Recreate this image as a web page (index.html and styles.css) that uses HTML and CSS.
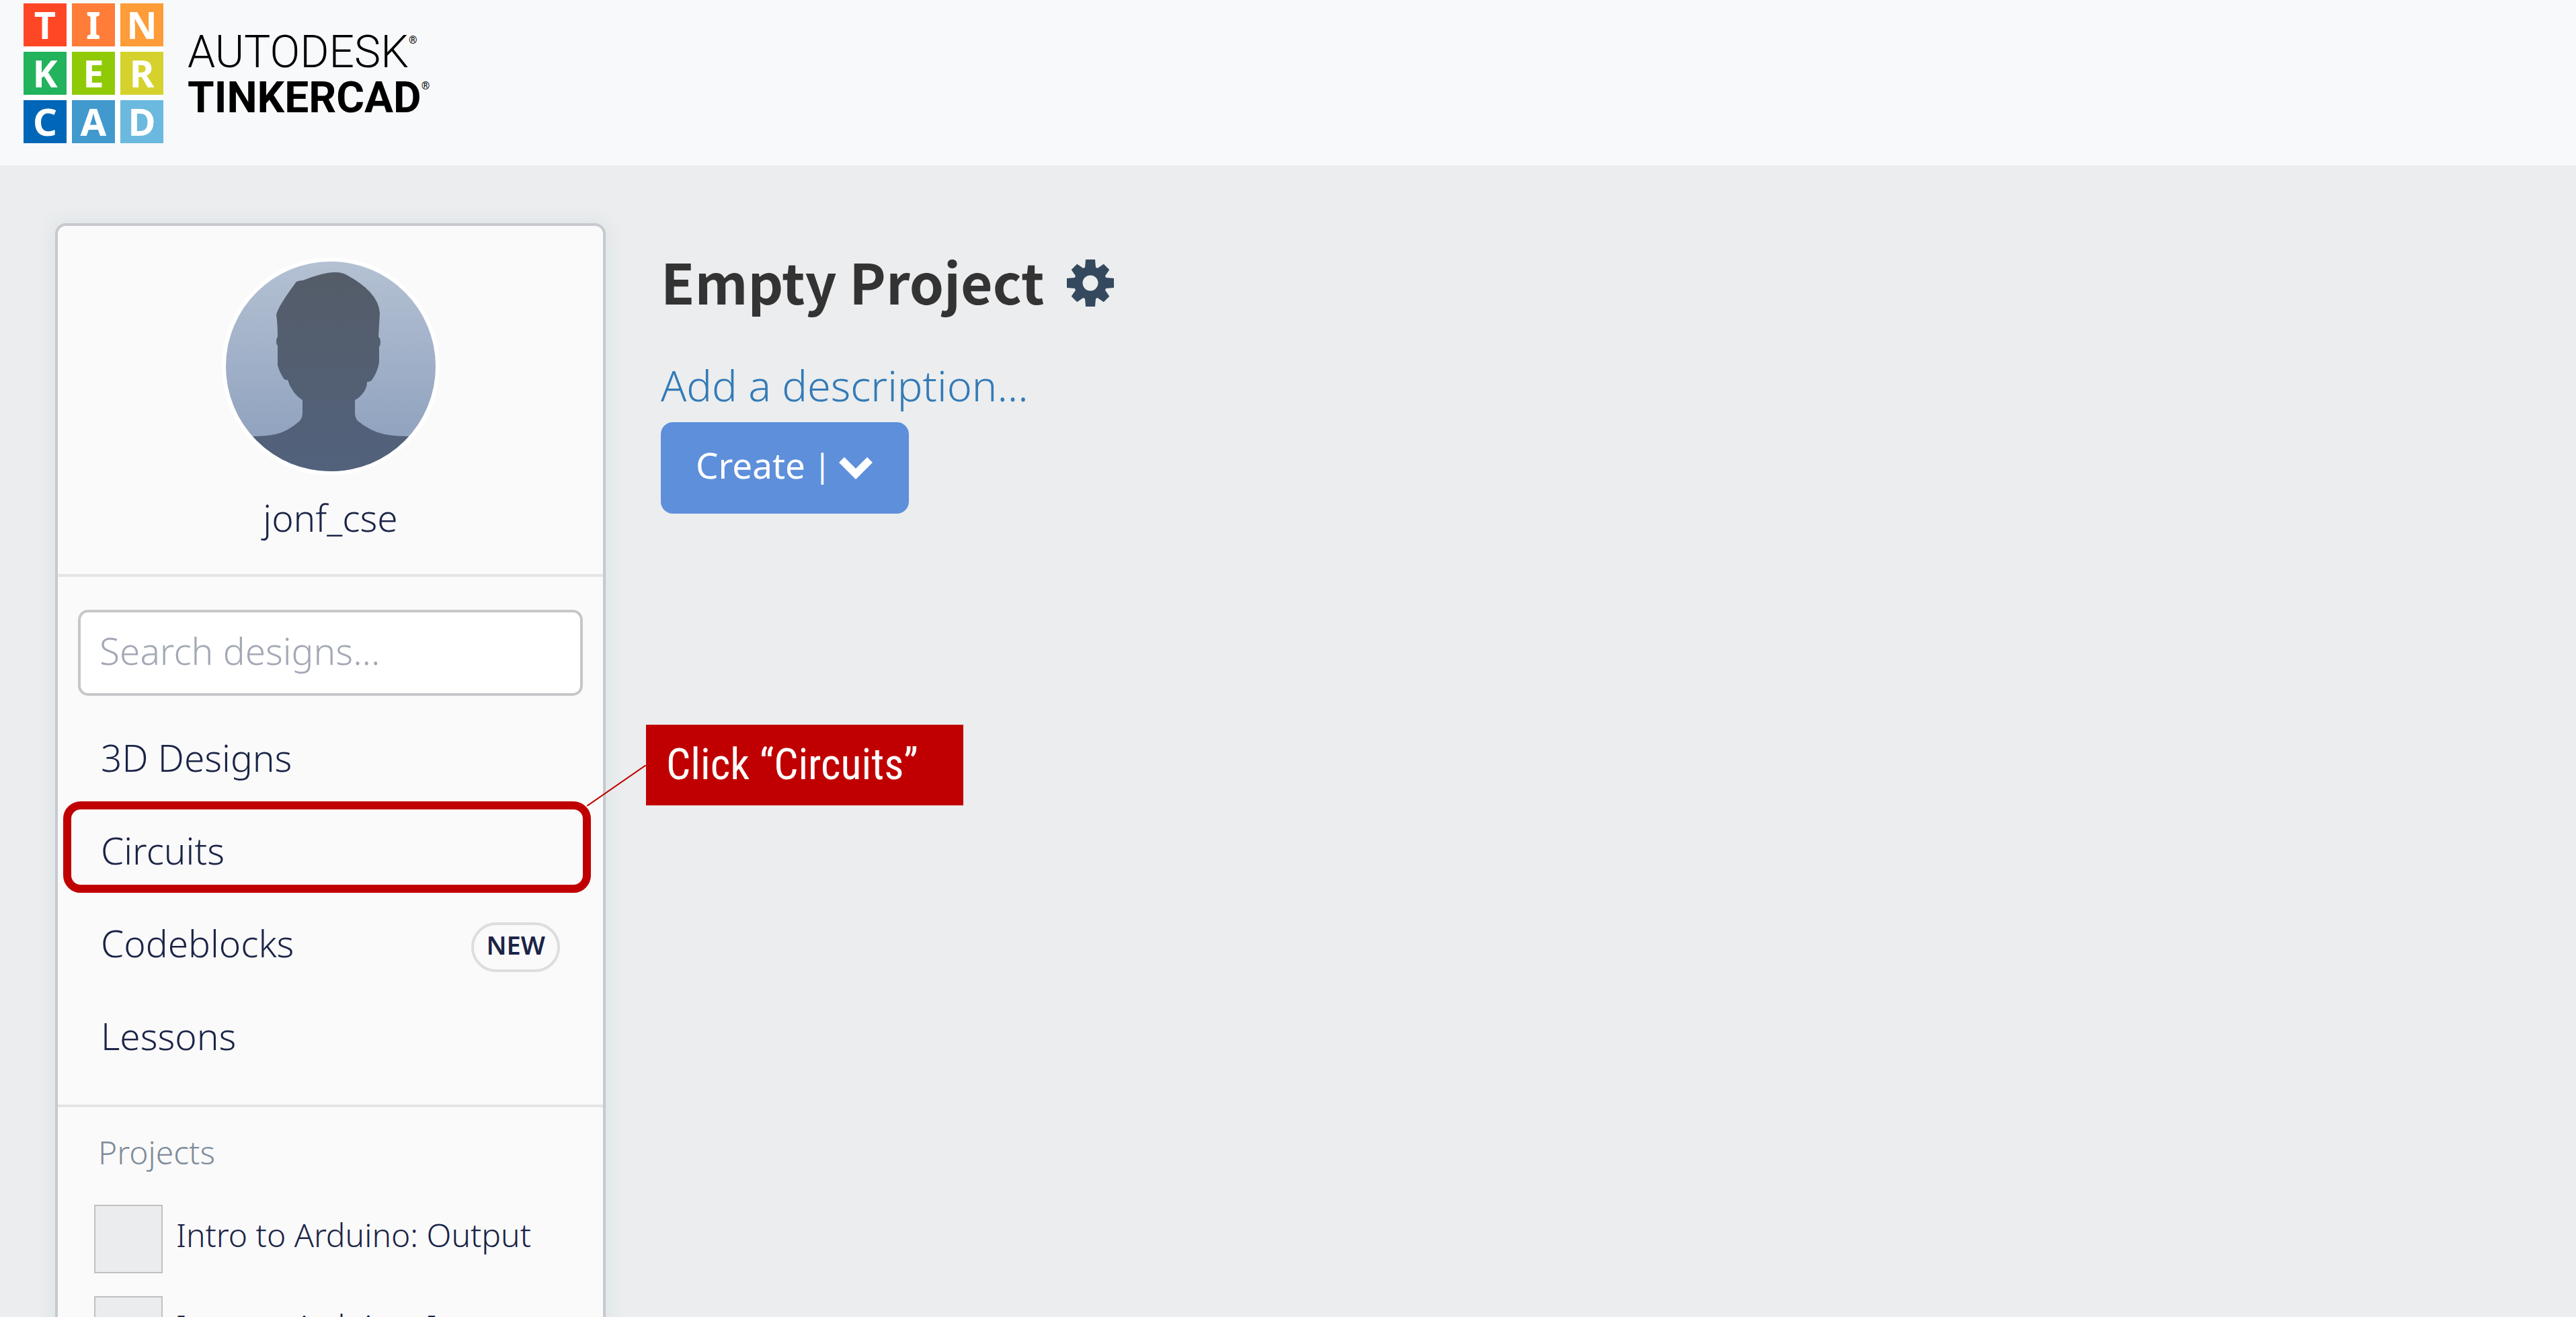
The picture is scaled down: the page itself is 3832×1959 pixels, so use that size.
FILE: index.html
```html
<!DOCTYPE html>
<html lang="en">
<head>
<meta charset="utf-8">
<title>Empty Project - Tinkercad</title>
<link rel="stylesheet" href="styles.css">
</head>
<body>
<header class="topbar">
  <a class="brand" href="#" aria-label="Autodesk Tinkercad">
    <span class="tiles" aria-hidden="true">
      <span class="tile t1">T</span><span class="tile t2">I</span><span class="tile t3">N</span>
      <span class="tile t4">K</span><span class="tile t5">E</span><span class="tile t6">R</span>
      <span class="tile t7">C</span><span class="tile t8">A</span><span class="tile t9">D</span>
    </span>
    <span class="wordmark">
      <span class="word word-light">AUTODESK<span class="reg">®</span></span>
      <span class="word word-bold">TINKERCAD<span class="reg">®</span></span>
    </span>
  </a>
</header>

<div class="layout">
  <aside class="sidebar">
    <section class="profile">
      <svg class="avatar" viewBox="0 0 312 312" role="img" aria-label="Profile picture">
        <defs>
          <linearGradient id="sky" x1="0" y1="0" x2="0" y2="1"><stop offset="0" stop-color="#b4c1d3"/><stop offset="1" stop-color="#8a9dbb"/></linearGradient>
          <linearGradient id="person" x1="0" y1="0" x2="0" y2="1"><stop offset="0" stop-color="#545c68"/><stop offset="1" stop-color="#52627c"/></linearGradient>
        </defs>
        <rect width="312" height="312" fill="url(#sky)"/>
        <path fill="url(#person)" d="M115 28Q145 16 162 16Q172 16 178 19Q202 32 214 45Q228 60 229 77L227 112Q230 114 230 120Q230 124 228 127V150Q226 163 218 175Q216 179 210 179Q210 186 206 193Q200 202 192 206V225Q192 232 196 237Q216 253 236 257Q252 260 270 260H312V312H0V260H41Q59 260 74 257Q92 253 110 237Q114 232 114 225V206Q104 200 99 191Q94 184 92 176Q88 177 86 174Q79 163 77 154V125Q75 123 75 120Q75 114 77 112Q77 92 75 79Q78 66 105 30Q110 28 115 28Z"/>
      </svg>
      <p class="username">jonf_cse</p>
    </section>

    <div class="browse">
      <input class="search" type="search" placeholder="Search designs..." aria-label="Search designs">
      <nav aria-label="Designs">
        <ul class="menu">
          <li><a href="#">3D Designs</a></li>
          <li class="target">
            <a href="#">Circuits</a>
            <span class="ring"></span>
            <svg class="leader" viewBox="0 0 88 61" aria-hidden="true"><path d="M0 61L88 0" stroke="#c00000" stroke-width="2"/></svg>
            <span class="callout">Click “Circuits”</span>
          </li>
          <li><a href="#">Codeblocks <span class="badge">NEW</span></a></li>
          <li><a href="#">Lessons</a></li>
        </ul>
      </nav>
    </div>

    <section class="projects">
      <h2>Projects</h2>
      <ul>
        <li><a href="#"><span class="thumb"></span><span class="name">Intro to Arduino: Output</span></a></li>
        <li><a href="#"><span class="thumb"></span><span class="name">Intro to Arduino: Input</span></a></li>
      </ul>
    </section>
  </aside>

  <main class="content">
    <div class="heading">
      <h1>Empty Project</h1>
      <button class="settings" type="button" aria-label="Project settings">
        <svg viewBox="-35 -35 70 70" fill="#34495e" aria-hidden="true">
          <circle r="18" fill="none" stroke="#34495e" stroke-width="13"/>
          <path d="M-7 -35H7L8 -23H-8ZM-7 35H7L8 23H-8ZM-35 -7V7L-23 8V-8ZM35 -7V7L23 8V-8Z"/>
          <path transform="rotate(45)" d="M-6 -34H6L8 -23H-8ZM-6 34H6L8 23H-8ZM-34 -6V6L-23 8V-8ZM34 -6V6L23 8V-8Z"/>
        </svg>
      </button>
    </div>
    <a class="describe" href="#">Add a description...</a>
    <button class="create" type="button">
      <span>Create</span><span class="bar">|</span>
      <svg class="chevron" viewBox="0 0 50 33" aria-hidden="true"><path fill="#fff" d="M8 0L25 17L42 0L50 8L25 33L0 8Z"/></svg>
    </button>
  </main>
</div>
</body>
</html>
```
FILE: styles.css
```css
* { box-sizing: border-box; }

body {
  margin: 0;
  height: 100vh;
  overflow: hidden;
  background: #ebedee;
  color: #1b2447;
  font-family: "Noto Sans", "Open Sans", sans-serif;
  font-size: 55px;
  font-weight: 300;
  line-height: 72px;
}

a { color: inherit; text-decoration: none; }
ul { margin: 0; padding: 0; list-style: none; }
button { border: 0; font: inherit; cursor: pointer; }

/* Top bar */
.topbar {
  height: 246px;
  padding: 5px 35px;
  background: #f7f9fb;
}
.brand {
  display: flex;
  align-items: flex-start;
  gap: 36px;
  width: fit-content;
}
.tiles {
  display: grid;
  grid-template-columns: repeat(3, 64px);
  grid-auto-rows: 64px;
  gap: 8px;
  background: #fff;
}
.tile {
  color: #fff;
  font-size: 56px;
  font-weight: 700;
  line-height: 62px;
  text-align: center;
}
.t1 { background: #ff4726; }
.t2 { background: #ff7c39; }
.t3 { background: #fd9c38; }
.t4 { background: #22b35c; }
.t5 { background: #90ca06; }
.t6 { background: #d5d22d; }
.t7 { background: #0066b8; }
.t8 { background: #4199cd; }
.t9 { background: #6bb9de; }
.wordmark {
  padding-top: 39px;
  color: #000;
  font-family: Roboto, sans-serif;
}
.word { display: flex; line-height: 68px; }
.word-light { font-size: 66px; font-weight: 300; }
.word-bold { font-size: 64px; font-weight: 700; }
.reg {
  font-size: 16px;
  font-weight: 400;
  line-height: 32px;
}

/* Page columns */
.layout {
  display: flex;
  align-items: flex-start;
  gap: 82px;
  padding: 86px 82px 0;
}

/* Sidebar card */
.sidebar {
  flex: 0 0 819px;
  border: 4px solid #c6c9ce;
  border-radius: 16px;
  background: #fafafa;
  box-shadow: 0 0 28px #d9e0e5;
}
.profile {
  padding: 47px 0 48px;
  border-bottom: 4px solid #e3e4e5;
  text-align: center;
}
.avatar {
  display: block;
  width: 324px;
  margin: 0 auto;
  border: 6px solid #fff;
  border-radius: 50%;
}
.username { margin: 27px 0 0; }

.browse {
  padding: 49px 0 33px;
  border-bottom: 4px solid #e3e4e5;
}
.search {
  display: block;
  width: calc(100% - 60px);
  height: 128px;
  margin: 0 30px 23px;
  padding: 0 28px 8px;
  border: 4px solid #c5c7c9;
  border-radius: 15px;
  background: #fff;
  color: inherit;
  font: inherit;
}
.search::placeholder { color: #a3a8b5; opacity: 1; }

.menu li { position: relative; }
.menu a {
  display: flex;
  align-items: center;
  justify-content: space-between;
  height: 138px;
  padding: 0 64px;
}
.badge {
  height: 74px;
  margin-top: 12px;
  padding: 0 18px;
  border: 4px solid #dcdddf;
  border-radius: 37px;
  font-size: 38px;
  font-weight: 600;
  line-height: 58px;
}

/* Tutorial pointer over the menu */
.ring {
  position: absolute;
  inset: -4px 18px 6px 8px;
  border: 12px solid #c00000;
  border-radius: 26px;
  pointer-events: none;
}
.leader {
  position: absolute;
  left: 787px;
  top: -58px;
  width: 88px;
}
.callout {
  position: absolute;
  left: 875px;
  top: -118px;
  width: 472px;
  padding: 0 30px;
  background: #c00000;
  color: #fff;
  font-family: "Roboto Condensed", Roboto, sans-serif;
  font-size: 64px;
  font-weight: 400;
  line-height: 120px;
  white-space: nowrap;
}

.projects {
  padding: 35px 54px;
  font-size: 48px;
  line-height: 64px;
}
.projects h2 {
  margin: 0 0 46px;
  padding-left: 6px;
  color: #7f8c9b;
  font-size: 48px;
  font-weight: 300;
}
.projects li { margin-bottom: 34px; }
.projects a { display: flex; align-items: center; gap: 20px; }
.thumb {
  width: 102px;
  height: 102px;
  border: 2px solid #c0c1c2;
  background: #ebecee;
}
.name { padding-bottom: 12px; }

/* Project page */
.content {
  display: flex;
  flex: 1;
  flex-direction: column;
  align-items: flex-start;
  padding-top: 30px;
}
.heading { display: flex; align-items: center; gap: 34px; }
.heading h1 {
  margin: 0;
  color: #333;
  font-family: "Noto Sans CJK SC", "Noto Sans", sans-serif;
  font-size: 82px;
  font-weight: 700;
  line-height: 112px;
}
.settings { padding: 6px 0 0; background: none; }
.settings svg { display: block; width: 70px; }
.describe {
  margin: 55px 0 11px;
  color: #337ab7;
  font-size: 63px;
  line-height: 88px;
}
.create {
  display: flex;
  align-items: center;
  height: 136px;
  padding: 0 54px 8px 52px;
  border-radius: 18px;
  background: #5d8fdb;
  color: #fff;
  font-size: 53px;
  font-weight: 400;
}
.bar {
  padding: 0 12px;
  font-size: 48px;
}
.chevron { width: 50px; margin-top: 8px; }
```
